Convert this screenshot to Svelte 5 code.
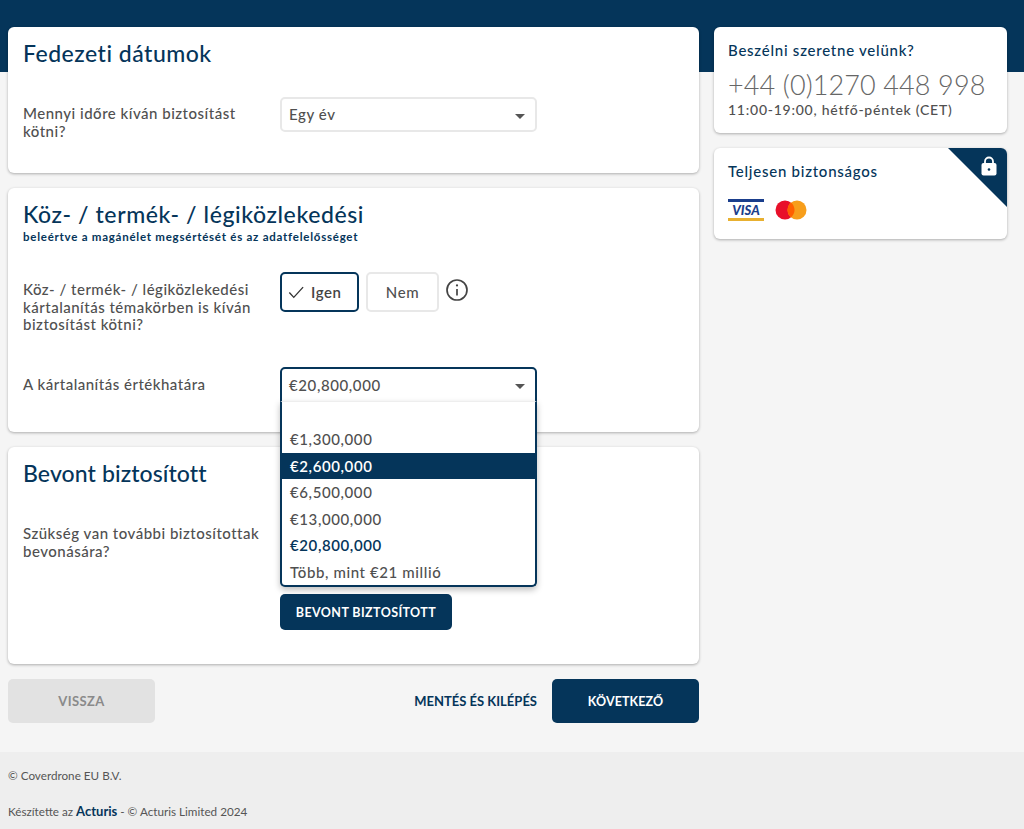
<script>
  const options = [
    { label: "", cls: "blank" },
    { label: "€1,300,000", cls: "" },
    { label: "€2,600,000", cls: "hover" },
    { label: "€6,500,000", cls: "" },
    { label: "€13,000,000", cls: "" },
    { label: "€20,800,000", cls: "picked" },
    { label: "Több, mint €21 millió", cls: "" }
  ];
</script>

<div class="page">
  <div class="layout">
    <main class="left">
      <section class="card first">
        <h2>Fedezeti dátumok</h2>
        <div class="row">
          <div class="label">Mennyi időre kíván biztosítást kötni?</div>
          <div class="select">
            <span>Egy év</span>
            <i class="caret"></i>
          </div>
        </div>
      </section>

      <section class="card second">
        <h2>Köz- / termék- / légiközlekedési</h2>
        <p class="sub">beleértve a magánélet megsértését és az adatfelelősséget</p>
        <div class="row yesno">
          <div class="label">Köz- / termék- / légiközlekedési kártalanítás témakörben is kíván biztosítást kötni?</div>
          <div class="toggle">
            <div class="opt on">
              <svg width="16" height="16" viewBox="0 0 18 18" fill="none" stroke="#333" stroke-width="1.5"><path d="M1.5 9.5 6.5 15 17 3.5" /></svg>
              Igen
            </div>
            <div class="opt">Nem</div>
            <svg class="info" width="24" height="24" viewBox="0 0 24 24" fill="none" stroke="#444" stroke-width="1.7">
              <circle cx="12" cy="12" r="10" />
              <path d="M12 11v6.5" />
              <circle cx="12" cy="7.4" r="1.1" fill="#444" stroke="none" />
            </svg>
          </div>
        </div>
        <div class="row limit">
          <div class="label">A kártalanítás értékhatára</div>
          <div class="select open">
            <span>€20,800,000</span>
            <i class="caret"></i>
            <ul class="menu">
              {#each options as o}
                <li class={o.cls}>{o.label}</li>
              {/each}
            </ul>
          </div>
        </div>
      </section>

      <section class="card third">
        <h2>Bevont biztosított</h2>
        <div class="row">
          <div class="label">Szükség van további biztosítottak bevonására?</div>
        </div>
        <div class="add-row">
          <button class="primary add">BEVONT BIZTOSÍTOTT</button>
        </div>
      </section>

      <div class="actions">
        <button class="back">VISSZA</button>
        <div class="right-actions">
          <span class="save">MENTÉS ÉS KILÉPÉS</span>
          <button class="primary next">KÖVETKEZŐ</button>
        </div>
      </div>
    </main>

    <aside class="side">
      <section class="card contact">
        <h3>Beszélni szeretne velünk?</h3>
        <div class="phone">+44 (0)1270 448 998</div>
        <div class="hours">11:00-19:00, hétfő-péntek (CET)</div>
      </section>
      <section class="card secure">
        <div class="corner"></div>
        <svg class="lock" width="16" height="20" viewBox="0 0 16 20">
          <path d="M4 8V5.5a4 4 0 0 1 8 0V8" fill="none" stroke="#fff" stroke-width="1.8" />
          <rect x="0.5" y="7" width="15" height="12.5" rx="2" fill="#fff" />
          <circle cx="8" cy="13.5" r="1.3" fill="#05355a" />
        </svg>
        <h3>Teljesen biztonságos</h3>
        <div class="cards">
          <div class="visa">
            <span>VISA</span>
          </div>
          <svg width="32" height="20" viewBox="0 0 32 20">
            <circle cx="10" cy="10" r="9.5" fill="#e8102a" />
            <circle cx="22" cy="10" r="9.5" fill="#f79e1b" />
            <path d="M16 2.6a9.5 9.5 0 0 1 0 14.8 9.5 9.5 0 0 1 0-14.8z" fill="#ff5f00" />
          </svg>
        </div>
      </section>
    </aside>
  </div>

  <footer>
    <p>© Coverdrone EU B.V.</p>
    <p>Készítette az <b>Acturis</b> - © Acturis Limited 2024</p>
  </footer>
</div>

<style>
  :global(body) {
    margin: 0;
    background: #f5f5f5;
  }

  .page {
    font-family: "Lato", "Open Sans", sans-serif;
    color: #505050;
    height: 829px;
    overflow: hidden;
    background: linear-gradient(#05355a 72px, #f5f5f5 72px);
  }

  .layout {
    display: flex;
    gap: 15px;
    padding: 27px 17px 0 8px;
    height: 752px;
    box-sizing: border-box;
  }

  .left {
    width: 691px;
  }

  .side {
    width: 293px;
  }

  .card {
    position: relative;
    background: #fff;
    border-radius: 6px;
    box-shadow: 0 1px 3px rgba(0, 0, 0, 0.3);
    padding: 0 15px;
    box-sizing: border-box;
    margin-bottom: 15px;
  }

  .first {
    height: 146px;
    padding-top: 12px;
  }

  .second {
    height: 244px;
    padding-top: 12px;
  }

  .third {
    height: 217px;
    padding-top: 12px;
  }

  h2 {
    margin: 0;
    font-size: 23px;
    line-height: 28px;
    font-weight: 500;
    color: #05355a;
    letter-spacing: 0.5px;
  }

  .second h2 {
    letter-spacing: 0.6px;
  }

  .third h2 {
    letter-spacing: 0.1px;
  }

  h3 {
    margin: 0;
    font-size: 15px;
    line-height: 20px;
    font-weight: 500;
    color: #05355a;
    letter-spacing: 0.75px;
  }

  .sub {
    margin: 2px 0 0;
    font-size: 11.5px;
    line-height: 13px;
    font-weight: 700;
    color: #05355a;
    letter-spacing: 0.75px;
  }

  .row {
    display: flex;
    align-items: flex-start;
  }

  .first .row {
    margin-top: 30px;
  }

  .yesno {
    margin-top: 29px;
  }

  .limit {
    margin-top: 33px;
  }

  .third .row {
    margin-top: 38px;
  }

  .label {
    width: 257px;
    flex: none;
    box-sizing: border-box;
    padding: 8px 12px 0 0;
    font-size: 15px;
    line-height: 17.5px;
    font-weight: 500;
    letter-spacing: 0.5px;
  }

  .yesno .label {
    padding-top: 9px;
  }

  .limit .label {
    padding-top: 9px;
  }

  .third .label {
    padding-top: 0;
  }

  .select {
    position: relative;
    width: 257px;
    height: 35px;
    box-sizing: border-box;
    border: 2px solid #e8e8e8;
    border-radius: 5px;
    background: #fff;
    display: flex;
    align-items: center;
    padding: 0 7px 2px;
    font-size: 15px;
    font-weight: 500;
    letter-spacing: 0.6px;
  }

  .select.open {
    height: 36px;
    padding-bottom: 0;
    border-color: #05355a;
    border-bottom-left-radius: 0;
    border-bottom-right-radius: 0;
  }

  .caret {
    position: absolute;
    right: 10px;
    top: 15px;
    border-left: 5.5px solid transparent;
    border-right: 5.5px solid transparent;
    border-top: 5px solid #555;
  }

  .menu {
    position: absolute;
    z-index: 2;
    left: -2px;
    right: -2px;
    top: 32px;
    margin: 0;
    padding: 0;
    list-style: none;
    background: #fff;
    border: 2px solid #05355a;
    border-top: 1px solid #eee;
    border-radius: 0 0 5px 5px;
    box-shadow: 0 3px 6px rgba(0, 0, 0, 0.25);
    height: 186px;
    box-sizing: border-box;
  }

  .menu li {
    height: 26.6px;
    line-height: 26.6px;
    padding: 0 8px;
  }

  .menu .blank {
    height: 24.6px;
  }

  .menu .hover {
    background: #05355a;
    color: #fff;
    font-weight: 600;
  }

  .menu .picked {
    color: #05355a;
    font-weight: 600;
  }

  .toggle {
    display: flex;
    align-items: flex-start;
    gap: 7px;
  }

  .opt {
    width: 73px;
    height: 40px;
    box-sizing: border-box;
    border: 2px solid #e8e8e8;
    border-radius: 5px;
    display: flex;
    align-items: center;
    justify-content: center;
    gap: 7px;
    font-size: 15px;
    font-weight: 500;
    letter-spacing: 0.6px;
  }

  .opt.on {
    width: 79px;
    justify-content: flex-start;
    padding-left: 6px;
    border-color: #05355a;
    color: #444;
    font-weight: 600;
  }

  .info {
    margin: 6px 0 0 -1px;
  }

  .add-row {
    margin: 34px 0 0 257px;
  }

  button {
    font-family: inherit;
    border: none;
    border-radius: 5px;
    font-weight: 700;
    letter-spacing: 0.4px;
    padding: 0;
  }

  .primary {
    background: #05355a;
    color: #fff;
  }

  .add {
    width: 172px;
    height: 36px;
    font-size: 12.5px;
  }

  .actions {
    display: flex;
    justify-content: space-between;
    align-items: center;
  }

  .back,
  .next {
    width: 147px;
    height: 44px;
    font-size: 13px;
  }

  .back {
    background: #e2e2e2;
    color: #8a8a8a;
  }

  .next {
    font-size: 12.5px;
    letter-spacing: 0.1px;
  }

  .right-actions {
    display: flex;
    align-items: center;
    gap: 15px;
  }

  .save {
    font-size: 13px;
    font-weight: 700;
    color: #05355a;
  }

  .contact {
    height: 106px;
    padding: 13px 14px 0;
  }

  .phone {
    margin-top: 8px;
    font-size: 27px;
    line-height: 34px;
    font-weight: 300;
    color: #666;
    letter-spacing: 0.12px;
    white-space: nowrap;
  }

  .hours {
    margin-top: -1px;
    font-size: 14px;
    line-height: 17px;
    font-weight: 500;
    letter-spacing: 0.75px;
  }

  .secure {
    height: 91px;
    padding: 13px 14px 0;
    overflow: hidden;
  }

  .corner {
    position: absolute;
    top: 0;
    right: 0;
    width: 59px;
    height: 59px;
    background: #05355a;
    clip-path: polygon(0 0, 100% 0, 100% 100%);
  }

  .lock {
    position: absolute;
    top: 8px;
    right: 10px;
  }

  .cards {
    display: flex;
    align-items: center;
    gap: 11px;
    margin-top: 18px;
  }

  .visa {
    width: 36px;
    height: 22px;
    box-sizing: border-box;
    border-top: 3px solid #1a3e8c;
    border-bottom: 3px solid #e8b030;
    display: flex;
    align-items: center;
    justify-content: center;
    color: #1a3e8c;
    font-size: 13px;
    font-weight: 900;
    font-style: italic;
  }

  footer {
    height: 77px;
    background: #eee;
    padding: 16px 8px 0;
    box-sizing: border-box;
    font-size: 11.7px;
    line-height: 14px;
    color: #555;
  }

  footer p {
    margin: 0 0 22px;
  }

  footer b {
    color: #05355a;
    font-size: 13px;
  }
</style>
